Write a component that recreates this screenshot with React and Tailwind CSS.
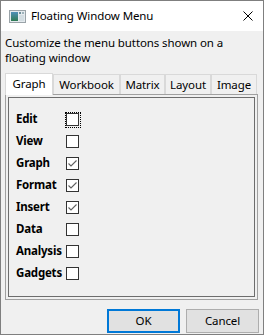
import React from "react";

const items = [
  { name: "Edit", checked: false, focus: true },
  { name: "View", checked: false },
  { name: "Graph", checked: true },
  { name: "Format", checked: true },
  { name: "Insert", checked: true },
  { name: "Data", checked: false },
  { name: "Analysis", checked: false },
  { name: "Gadgets", checked: false },
];

const tabs = [
  { name: "Workbook", w: "w-[67px]" },
  { name: "Matrix", w: "w-[45px]" },
  { name: "Layout", w: "w-[46px]" },
  { name: "Image", w: "w-[46px]" },
];

const TitleIcon = () => (
  <svg width="17" height="13" viewBox="0 0 17 13">
    <defs>
      <linearGradient id="g1" x1="0" y1="0" x2="0" y2="1">
        <stop offset="0" stopColor="#4f8fb8" />
        <stop offset="1" stopColor="#2e7a52" />
      </linearGradient>
    </defs>
    <rect x="0.5" y="0.5" width="16" height="12" fill="#e4eaee" stroke="#9aa3a8" />
    <rect x="2" y="2" width="7" height="9" fill="url(#g1)" />
    <rect x="10" y="2" width="2" height="2" fill="#6f8f9a" />
    <rect x="13" y="2" width="2" height="2" fill="#9fb3bb" />
    <rect x="10" y="5" width="5" height="6" fill="#d3dde2" />
  </svg>
);

const CloseIcon = () => (
  <svg width="10" height="10" viewBox="0 0 10 10">
    <path d="M0.5 0.5 L9.5 9.5 M9.5 0.5 L0.5 9.5" stroke="#000" strokeWidth="1" fill="none" />
  </svg>
);

const Check = ({ checked, focus }) => (
  <div className="relative w-[13px] h-[13px]">
    <div className="w-[13px] h-[13px] border border-[#333333] bg-white">
      {checked && (
        <svg width="11" height="11" viewBox="0 0 11 11" className="block">
          <path d="M1.5 5.5 L4 8 L9.5 2.5" stroke="#5f5f5f" strokeWidth="1.1" fill="none" />
        </svg>
      )}
    </div>
    {focus && (
      <span className="absolute -left-[1px] -top-[1px] w-[16px] h-[16px] border border-dotted border-black" />
    )}
  </div>
);

export default function App() {
  return (
    <div className="w-[264px] h-[335px] border border-[#7f7f7f] bg-[#f0f0f0] flex flex-col text-[11.5px] tracking-[-0.1px] text-black font-['Noto_Sans',sans-serif]">
      <div className="h-[30px] bg-white flex items-center shrink-0">
        <div className="ml-[8px] mt-[1px]">
          <TitleIcon />
        </div>
        <div className="ml-[5px] leading-[16px]">Floating Window Menu</div>
        <div className="ml-auto mr-[10px] mt-[-1px]">
          <CloseIcon />
        </div>
      </div>

      <div className="pl-[4px] pt-[4px] leading-[15px]">
        Customize the menu buttons shown on a
        <br />
        floating window
      </div>

      <div className="mt-[7px] ml-[4px] flex items-end h-[22px]">
        <div className="relative z-10 w-[48px] h-[22px] -mb-[1px] bg-white border border-b-0 border-[#d9d9d9] flex items-center justify-center pb-[1px]">
          Graph
        </div>
        {tabs.map((t) => (
          <div
            key={t.name}
            className={`${t.w} h-[20px] border border-b-0 border-[#d9d9d9] flex items-center justify-center`}
          >
            {t.name}
          </div>
        ))}
      </div>

      <div className="ml-[4px] w-[253px] h-[206px] border border-[#a0a0a0] p-[2px]">
        <div className="h-full border border-[#6d6d6d] pt-[10px] pl-[7px]">
          {items.map((it) => (
            <div key={it.name} className="h-[22px] flex items-center">
              <div className="w-[50px] font-bold tracking-[-0.2px] leading-[16px]">{it.name}</div>
              <Check checked={it.checked} focus={it.focus} />
            </div>
          ))}
        </div>
      </div>

      <div className="mt-[9px] flex justify-end gap-[6px] pr-[4px]">
        <button className="w-[73px] h-[24px] bg-[#e1e1e1] border-2 border-[#0078d7] leading-[16px]">
          OK
        </button>
        <button className="w-[73px] h-[24px] bg-[#e1e1e1] border border-[#adadad] leading-[16px]">
          Cancel
        </button>
      </div>
    </div>
  );
}
